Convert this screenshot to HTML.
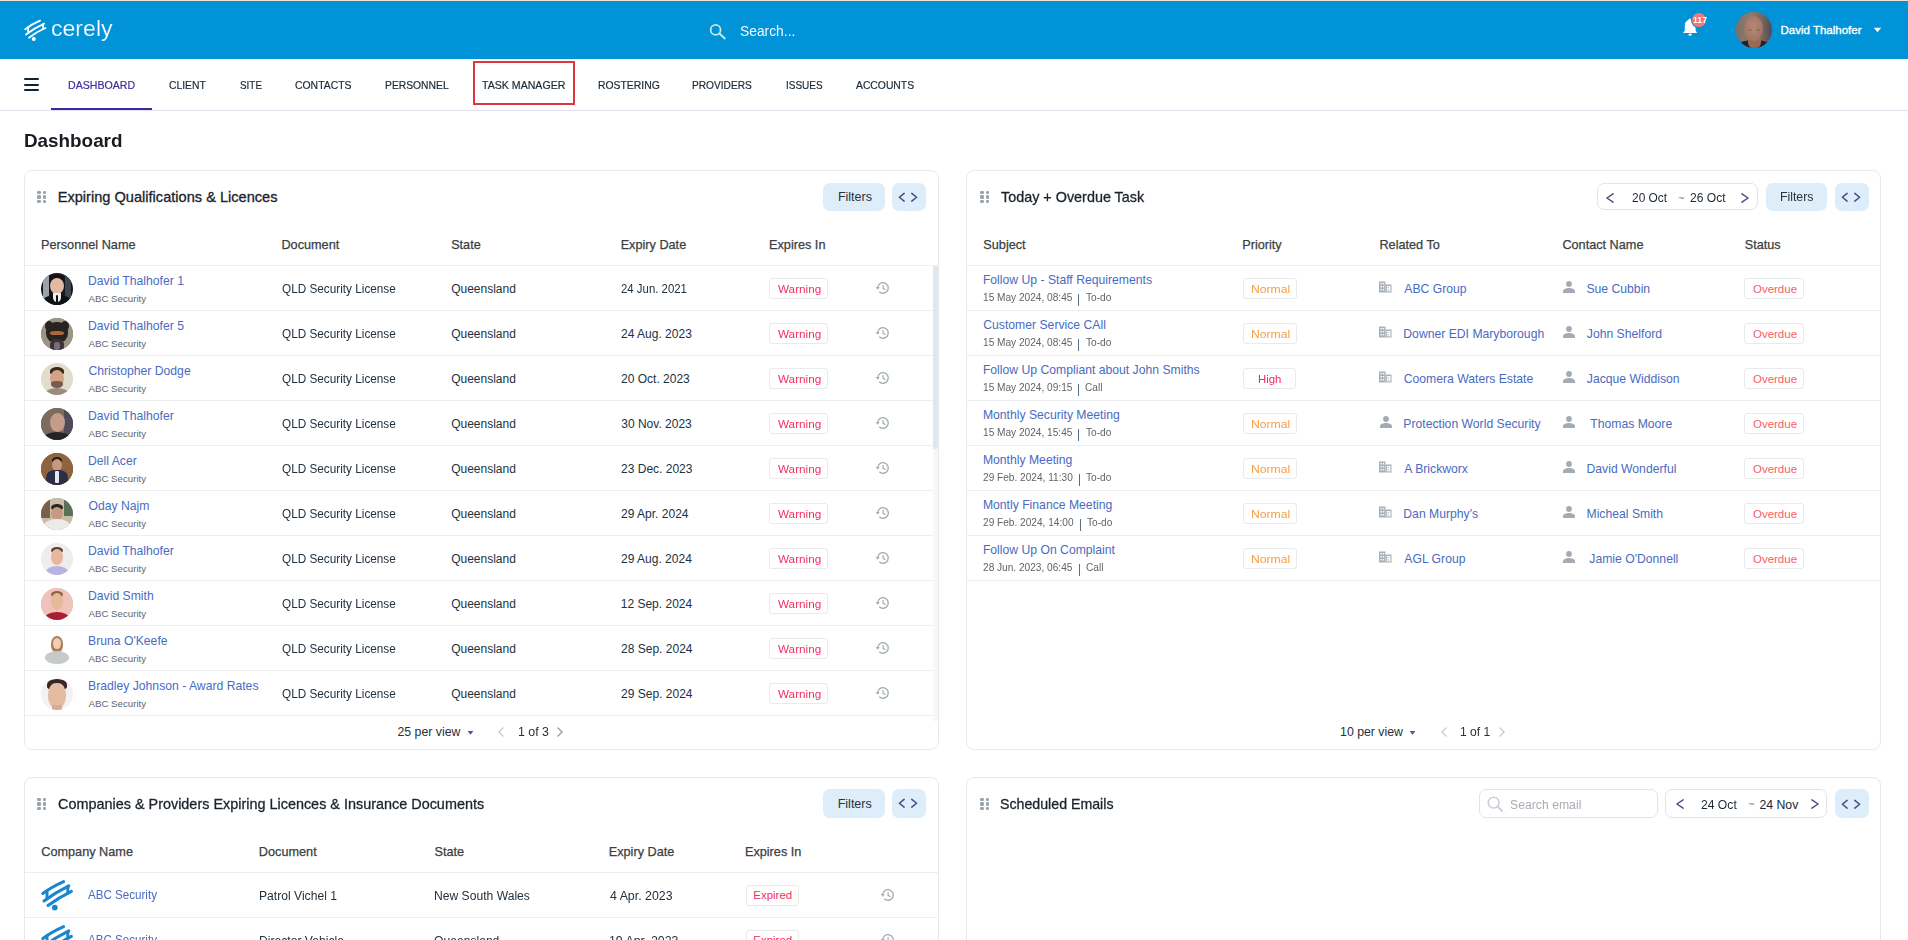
<!DOCTYPE html>
<html><head><meta charset="utf-8"><title>Dashboard</title>
<style>
*{box-sizing:border-box;margin:0;padding:0}
html,body{width:1908px;height:940px;overflow:hidden;background:#fff;font-family:"Liberation Sans",sans-serif}
.a{position:absolute}
.card{position:absolute;background:#fff;border:1px solid #e9e9eb;border-radius:8px}
.btn{position:absolute;background:#ddedfa;border-radius:7px}
.sep{position:absolute;height:1px;background:#eceef0}
.tag{position:absolute;border:1px solid #e9eaec;border-radius:3px;background:#fff}
.av{position:absolute;width:32px;height:32px;border-radius:50%;overflow:hidden}
.av i{position:absolute;display:block;filter:blur(0.6px)}
</style></head>
<body>
<div class="a" style="left:0;top:0;width:1908px;height:1px;background:#eee3d6"></div>
<div class="a" style="left:0;top:1px;width:1908px;height:58px;background:#0093d7"></div>
<svg class="a" style="left:20.30px;top:14.60px" width="32.56" height="32.56" viewBox="0 0 44 44"><g stroke="#fff" stroke-width="2.40" stroke-linecap="round" fill="none"><path d="M7 19.2 Q16.3 12 27.2 7.6"/><path d="M8.1 26.3 Q19.6 17.6 32.7 11.6"/><path d="M12.2 30.7 Q22.5 22.8 34.4 17.6"/><path d="M11 16.4 L11 23.6"/><path d="M31.2 12.3 L31.2 18.4"/></g><circle cx="18.6" cy="32.3" r="2.7" fill="#fff"/></svg>
<div style="position:absolute;left:51.04px;top:18.00px;font-size:22.5px;line-height:1;color:#fff;white-space:nowrap;transform:scaleX(1.0254);transform-origin:0 0;-webkit-text-stroke:0.2px #0093d7;">cerely</div>
<svg class="a" style="left:706px;top:20px" width="24" height="22" viewBox="0 0 24 22">
<circle cx="9.6" cy="9.9" r="4.95" stroke="#d0e6d8" stroke-width="1.8" fill="none"/>
<path d="M13.4 13.6 L18.8 18.4" stroke="#d0e6d8" stroke-width="2" stroke-linecap="round"/></svg>
<div style="position:absolute;left:740.44px;top:24.00px;font-size:14.5px;line-height:1;color:#f2f8fc;white-space:nowrap;transform:scaleX(0.9536);transform-origin:0 0;">Search...</div>
<svg class="a" style="left:1681px;top:16px" width="18" height="22" viewBox="0 0 18 22">
<path d="M8.8 2.4 C8 2.4 7.5 3.2 7.5 3.9 C5.1 4.6 3.8 6.8 3.8 9.6 L3.8 14.6 L2.1 17 L16.1 17 L14.6 14.6 L14.6 9.6 C14.6 6.8 13.1 4.6 10.1 3.9 C10.1 3.2 9.6 2.4 8.8 2.4Z" fill="#fff"/>
<ellipse cx="9.1" cy="18.7" rx="1.7" ry="1.1" fill="#fff"/></svg>
<div class="a" style="left:1692.3px;top:13.2px;width:13.6px;height:13.6px;border-radius:50%;background:#f57674;box-shadow:0 0 0 1px #0093d7"></div>
<div style="position:absolute;left:1692.57px;top:17.00px;font-size:8.2px;line-height:1;color:#fff;white-space:nowrap;font-weight:bold;transform:scaleX(1.0558);transform-origin:0 0;">117</div>
<div class="a" style="left:1736px;top:12px;width:36px;height:36px;border-radius:50%;overflow:hidden;background:#857468">
<div class="a" style="left:0;top:0;width:36px;height:36px;background:linear-gradient(90deg,#7e6e66,#8c7c72 40%,#72665e 75%,#50485a)"></div>
<div class="a" style="left:-3px;top:28px;width:42px;height:22px;border-radius:50%;background:#1e202e"></div>
<div class="a" style="left:11.5px;top:24px;width:13px;height:13px;border-radius:0 0 50% 50%;background:#9a6a56"></div>
<div class="a" style="left:8px;top:4px;width:19px;height:25px;border-radius:50%;background:radial-gradient(ellipse at 50% 45%,#b48878 0,#a87a68 55%,#94705e 100%)"></div>
<div class="a" style="left:12px;top:17px;width:4px;height:1.5px;background:#6a4a40;opacity:.3"></div>
<div class="a" style="left:19.5px;top:17px;width:4px;height:1.5px;background:#6a4a40;opacity:.3"></div>
</div>
<div style="position:absolute;left:1780.57px;top:25.00px;font-size:11.5px;line-height:1;color:#fff;white-space:nowrap;-webkit-text-stroke:0.35px #fff;">David Thalhofer</div>
<svg class="a" style="left:1873px;top:27px" width="9" height="6" viewBox="0 0 9 6"><path d="M0.8 0.8 L8.2 0.8 L4.5 5.2Z" fill="#fff"/></svg>
<div class="a" style="left:0;top:110px;width:1908px;height:1px;background:#e2e3ee"></div>
<div class="a" style="left:24px;top:78.2px;width:15px;height:1.9px;background:#0f2535;border-radius:1px"></div>
<div class="a" style="left:24px;top:83.7px;width:15px;height:1.9px;background:#0f2535;border-radius:1px"></div>
<div class="a" style="left:24px;top:89.2px;width:15px;height:1.9px;background:#0f2535;border-radius:1px"></div>
<div class="a" style="left:51px;top:108px;width:101px;height:2px;background:#3a2a9d"></div>
<div style="position:absolute;left:68.03px;top:80.00px;font-size:11.4px;line-height:1;color:#3b2c9c;white-space:nowrap;transform:scaleX(0.9297);transform-origin:0 0;-webkit-text-stroke:0.2px #3b2c9c;">DASHBOARD</div>
<div style="position:absolute;left:168.99px;top:80.00px;font-size:11.4px;line-height:1;color:#1a2936;white-space:nowrap;transform:scaleX(0.9085);transform-origin:0 0;-webkit-text-stroke:0.2px #1a2936;">CLIENT</div>
<div style="position:absolute;left:239.57px;top:80.00px;font-size:11.4px;line-height:1;color:#1a2936;white-space:nowrap;transform:scaleX(0.8679);transform-origin:0 0;-webkit-text-stroke:0.2px #1a2936;">SITE</div>
<div style="position:absolute;left:294.99px;top:80.00px;font-size:11.4px;line-height:1;color:#1a2936;white-space:nowrap;transform:scaleX(0.9138);transform-origin:0 0;-webkit-text-stroke:0.2px #1a2936;">CONTACTS</div>
<div style="position:absolute;left:384.65px;top:80.00px;font-size:11.4px;line-height:1;color:#1a2936;white-space:nowrap;transform:scaleX(0.9054);transform-origin:0 0;-webkit-text-stroke:0.2px #1a2936;">PERSONNEL</div>
<div style="position:absolute;left:482.27px;top:80.00px;font-size:11.4px;line-height:1;color:#1a2936;white-space:nowrap;transform:scaleX(0.9296);transform-origin:0 0;-webkit-text-stroke:0.2px #1a2936;">TASK MANAGER</div>
<div style="position:absolute;left:598.15px;top:80.00px;font-size:11.4px;line-height:1;color:#1a2936;white-space:nowrap;transform:scaleX(0.9117);transform-origin:0 0;-webkit-text-stroke:0.2px #1a2936;">ROSTERING</div>
<div style="position:absolute;left:692.46px;top:80.00px;font-size:11.4px;line-height:1;color:#1a2936;white-space:nowrap;transform:scaleX(0.8908);transform-origin:0 0;-webkit-text-stroke:0.2px #1a2936;">PROVIDERS</div>
<div style="position:absolute;left:785.57px;top:80.00px;font-size:11.4px;line-height:1;color:#1a2936;white-space:nowrap;transform:scaleX(0.8773);transform-origin:0 0;-webkit-text-stroke:0.2px #1a2936;">ISSUES</div>
<div style="position:absolute;left:855.50px;top:80.00px;font-size:11.4px;line-height:1;color:#1a2936;white-space:nowrap;transform:scaleX(0.9082);transform-origin:0 0;-webkit-text-stroke:0.2px #1a2936;">ACCOUNTS</div>
<div class="a" style="left:473px;top:61px;width:102px;height:44px;border:2px solid #e0363e"></div>
<div style="position:absolute;left:23.96px;top:131.00px;font-size:19px;line-height:1;color:#171c22;white-space:nowrap;font-weight:bold;transform:scaleX(0.9922);transform-origin:0 0;">Dashboard</div>
<div class="card" style="left:24px;top:170px;width:915px;height:580px"></div>
<div class="a" style="left:37.0px;top:191.2px;width:3.6px;height:3.3px;border-radius:1.2px;background:#9aa4ac"></div>
<div class="a" style="left:42.5px;top:191.2px;width:3.6px;height:3.3px;border-radius:1.2px;background:#9aa4ac"></div>
<div class="a" style="left:37.0px;top:195.4px;width:3.6px;height:3.3px;border-radius:1.2px;background:#9aa4ac"></div>
<div class="a" style="left:42.5px;top:195.4px;width:3.6px;height:3.3px;border-radius:1.2px;background:#9aa4ac"></div>
<div class="a" style="left:37.0px;top:199.6px;width:3.6px;height:3.3px;border-radius:1.2px;background:#9aa4ac"></div>
<div class="a" style="left:42.5px;top:199.6px;width:3.6px;height:3.3px;border-radius:1.2px;background:#9aa4ac"></div>
<div style="position:absolute;left:57.71px;top:190.00px;font-size:14.6px;line-height:1;color:#1b232c;white-space:nowrap;-webkit-text-stroke:0.3px #1b232c;">Expiring Qualifications &amp; Licences</div>
<div class="btn" style="left:823.0px;top:183.0px;width:62.0px;height:28.0px"></div>
<div style="position:absolute;left:837.90px;top:191.00px;font-size:12.5px;line-height:1;color:#27323d;white-space:nowrap;">Filters</div>
<div class="btn" style="left:892.0px;top:183.0px;width:34.0px;height:28.0px"></div>
<svg class="a" style="left:898.0px;top:190.0px" width="22" height="14" viewBox="0 0 22 14"><path d="M6.1 3.4 L1.4 7.25 L6.1 11.1 M13.8 3.4 L18.6 7.25 L13.8 11.1" stroke="#4b4f86" stroke-width="1.6" fill="none" stroke-linecap="round" stroke-linejoin="round"/></svg>
<div style="position:absolute;left:41.04px;top:239.00px;font-size:12.7px;line-height:1;color:#3b3e42;white-space:nowrap;-webkit-text-stroke:0.25px #3b3e42;">Personnel Name</div>
<div style="position:absolute;left:281.44px;top:239.00px;font-size:12.7px;line-height:1;color:#3b3e42;white-space:nowrap;-webkit-text-stroke:0.25px #3b3e42;">Document</div>
<div style="position:absolute;left:451.14px;top:239.00px;font-size:12.7px;line-height:1;color:#3b3e42;white-space:nowrap;-webkit-text-stroke:0.25px #3b3e42;">State</div>
<div style="position:absolute;left:620.64px;top:239.00px;font-size:12.7px;line-height:1;color:#3b3e42;white-space:nowrap;-webkit-text-stroke:0.25px #3b3e42;">Expiry Date</div>
<div style="position:absolute;left:769.04px;top:239.00px;font-size:12.7px;line-height:1;color:#3b3e42;white-space:nowrap;-webkit-text-stroke:0.25px #3b3e42;">Expires In</div>
<div class="sep" style="left:25px;top:265px;width:913px"></div>
<div class="av" style="left:41.0px;top:272.5px;background:#15171c"><i style="left:2.0px;top:0.0px;width:6.0px;height:32.0px;background:#9aa2ac;border-radius:0"></i><i style="left:24.0px;top:0.0px;width:6.0px;height:32.0px;background:#3e4650;border-radius:0"></i><i style="left:9.0px;top:2.0px;width:14.0px;height:9.0px;background:#1a1210;border-radius:50% 50% 30% 30%"></i><i style="left:9.0px;top:5.0px;width:14.0px;height:16.0px;background:#e2baa4;border-radius:50%"></i><i style="left:2.0px;top:22.0px;width:28.0px;height:14.0px;background:#101114;border-radius:45%"></i><i style="left:12.0px;top:20.0px;width:8.0px;height:9.0px;background:#f0f0f0;border-radius:0 0 50% 50%"></i><i style="left:15.0px;top:22.0px;width:2.0px;height:9.0px;background:#111;border-radius:1px"></i></div>
<div style="position:absolute;left:88.00px;top:275.00px;font-size:12.2px;line-height:1;color:#4a6bbf;white-space:nowrap;">David Thalhofer 1</div>
<div style="position:absolute;left:88.50px;top:294.00px;font-size:9.7px;line-height:1;color:#62666b;white-space:nowrap;">ABC Security</div>
<div style="position:absolute;left:281.95px;top:283.00px;font-size:12px;line-height:1;color:#22313f;white-space:nowrap;transform:scaleX(0.9805);transform-origin:0 0;">QLD Security License</div>
<div style="position:absolute;left:451.14px;top:283.00px;font-size:12px;line-height:1;color:#22313f;white-space:nowrap;">Queensland</div>
<div style="position:absolute;left:621.11px;top:283.00px;font-size:12px;line-height:1;color:#22313f;white-space:nowrap;transform:scaleX(0.9500);transform-origin:0 0;">24 Jun. 2021</div>
<div class="tag" style="left:769.0px;top:278.0px;width:58.7px;height:21.0px"></div>
<div style="position:absolute;left:778.04px;top:284.00px;font-size:11.5px;line-height:1;color:#f52f62;white-space:nowrap;transform:scaleX(1.0186);transform-origin:0 0;">Warning</div>
<svg class="a" style="left:875.0px;top:280.0px" width="16" height="16" viewBox="0 0 16 16"><path d="M2.7 8 A5.3 5.3 0 1 1 4.25 11.75" stroke="#a2acb3" stroke-width="1.35" fill="none"/><path d="M0.7 7 L4.7 7 L2.7 9.8Z" fill="#a2acb3"/><path d="M8.1 5.3 L8.1 8.3 L10.1 9.5" stroke="#a2acb3" stroke-width="1.2" fill="none" stroke-linecap="round"/></svg>
<div class="sep" style="left:25px;top:310px;width:908px"></div>
<div class="av" style="left:41.0px;top:317.5px;background:#8a8274"><i style="left:0.0px;top:0.0px;width:32.0px;height:32.0px;background:#9c9484;border-radius:0"></i><i style="left:5.0px;top:4.0px;width:22.0px;height:21.0px;background:#262422;border-radius:45%"></i><i style="left:4.0px;top:3.0px;width:8.0px;height:10.0px;background:#262422;border-radius:50%"></i><i style="left:20.0px;top:3.0px;width:8.0px;height:10.0px;background:#262422;border-radius:50%"></i><i style="left:9.0px;top:13.0px;width:14.0px;height:4.0px;background:#b06838;border-radius:40%"></i><i style="left:9.0px;top:21.0px;width:14.0px;height:13.0px;background:#3a3438;border-radius:40%"></i><i style="left:13.0px;top:24.0px;width:6.0px;height:8.0px;background:#7a6a80;border-radius:40%"></i></div>
<div style="position:absolute;left:88.00px;top:320.00px;font-size:12.2px;line-height:1;color:#4a6bbf;white-space:nowrap;">David Thalhofer 5</div>
<div style="position:absolute;left:88.50px;top:339.00px;font-size:9.7px;line-height:1;color:#62666b;white-space:nowrap;">ABC Security</div>
<div style="position:absolute;left:281.95px;top:328.00px;font-size:12px;line-height:1;color:#22313f;white-space:nowrap;transform:scaleX(0.9805);transform-origin:0 0;">QLD Security License</div>
<div style="position:absolute;left:451.14px;top:328.00px;font-size:12px;line-height:1;color:#22313f;white-space:nowrap;">Queensland</div>
<div style="position:absolute;left:621.08px;top:328.00px;font-size:12px;line-height:1;color:#22313f;white-space:nowrap;">24 Aug. 2023</div>
<div class="tag" style="left:769.0px;top:323.0px;width:58.7px;height:21.0px"></div>
<div style="position:absolute;left:778.04px;top:329.00px;font-size:11.5px;line-height:1;color:#f52f62;white-space:nowrap;transform:scaleX(1.0186);transform-origin:0 0;">Warning</div>
<svg class="a" style="left:875.0px;top:325.0px" width="16" height="16" viewBox="0 0 16 16"><path d="M2.7 8 A5.3 5.3 0 1 1 4.25 11.75" stroke="#a2acb3" stroke-width="1.35" fill="none"/><path d="M0.7 7 L4.7 7 L2.7 9.8Z" fill="#a2acb3"/><path d="M8.1 5.3 L8.1 8.3 L10.1 9.5" stroke="#a2acb3" stroke-width="1.2" fill="none" stroke-linecap="round"/></svg>
<div class="sep" style="left:25px;top:355px;width:908px"></div>
<div class="av" style="left:41.0px;top:362.5px;background:#e2dccf"><i style="left:9.0px;top:4.0px;width:14.0px;height:8.0px;background:#3a2818;border-radius:50% 50% 30% 30%"></i><i style="left:9.0px;top:7.0px;width:14.0px;height:17.0px;background:#d2a486;border-radius:50%"></i><i style="left:10.0px;top:18.0px;width:12.0px;height:7.0px;background:#7a5a48;border-radius:40% 40% 50% 50%"></i><i style="left:4.0px;top:25.0px;width:24.0px;height:12.0px;background:#9a8c7c;border-radius:50%"></i></div>
<div style="position:absolute;left:88.38px;top:365.00px;font-size:12.2px;line-height:1;color:#4a6bbf;white-space:nowrap;">Christopher Dodge</div>
<div style="position:absolute;left:88.50px;top:384.00px;font-size:9.7px;line-height:1;color:#62666b;white-space:nowrap;">ABC Security</div>
<div style="position:absolute;left:281.95px;top:373.00px;font-size:12px;line-height:1;color:#22313f;white-space:nowrap;transform:scaleX(0.9805);transform-origin:0 0;">QLD Security License</div>
<div style="position:absolute;left:451.14px;top:373.00px;font-size:12px;line-height:1;color:#22313f;white-space:nowrap;">Queensland</div>
<div style="position:absolute;left:621.08px;top:373.00px;font-size:12px;line-height:1;color:#22313f;white-space:nowrap;">20 Oct. 2023</div>
<div class="tag" style="left:769.0px;top:368.0px;width:58.7px;height:21.0px"></div>
<div style="position:absolute;left:778.04px;top:374.00px;font-size:11.5px;line-height:1;color:#f52f62;white-space:nowrap;transform:scaleX(1.0186);transform-origin:0 0;">Warning</div>
<svg class="a" style="left:875.0px;top:370.0px" width="16" height="16" viewBox="0 0 16 16"><path d="M2.7 8 A5.3 5.3 0 1 1 4.25 11.75" stroke="#a2acb3" stroke-width="1.35" fill="none"/><path d="M0.7 7 L4.7 7 L2.7 9.8Z" fill="#a2acb3"/><path d="M8.1 5.3 L8.1 8.3 L10.1 9.5" stroke="#a2acb3" stroke-width="1.2" fill="none" stroke-linecap="round"/></svg>
<div class="sep" style="left:25px;top:400px;width:908px"></div>
<div class="av" style="left:41.0px;top:407.5px;background:#6e6055"><i style="left:0.0px;top:0.0px;width:32.0px;height:32.0px;background:#7c6b5e;border-radius:0"></i><i style="left:23.0px;top:0.0px;width:9.0px;height:32.0px;background:#4e4a5a;border-radius:0"></i><i style="left:9.0px;top:5.0px;width:15.0px;height:19.0px;background:#c49c88;border-radius:50%"></i><i style="left:3.0px;top:24.0px;width:26.0px;height:12.0px;background:#25232a;border-radius:50%"></i></div>
<div style="position:absolute;left:88.00px;top:410.00px;font-size:12.2px;line-height:1;color:#4a6bbf;white-space:nowrap;">David Thalhofer</div>
<div style="position:absolute;left:88.50px;top:429.00px;font-size:9.7px;line-height:1;color:#62666b;white-space:nowrap;">ABC Security</div>
<div style="position:absolute;left:281.95px;top:418.00px;font-size:12px;line-height:1;color:#22313f;white-space:nowrap;transform:scaleX(0.9805);transform-origin:0 0;">QLD Security License</div>
<div style="position:absolute;left:451.14px;top:418.00px;font-size:12px;line-height:1;color:#22313f;white-space:nowrap;">Queensland</div>
<div style="position:absolute;left:621.26px;top:418.00px;font-size:12px;line-height:1;color:#22313f;white-space:nowrap;">30 Nov. 2023</div>
<div class="tag" style="left:769.0px;top:413.0px;width:58.7px;height:21.0px"></div>
<div style="position:absolute;left:778.04px;top:419.00px;font-size:11.5px;line-height:1;color:#f52f62;white-space:nowrap;transform:scaleX(1.0186);transform-origin:0 0;">Warning</div>
<svg class="a" style="left:875.0px;top:415.0px" width="16" height="16" viewBox="0 0 16 16"><path d="M2.7 8 A5.3 5.3 0 1 1 4.25 11.75" stroke="#a2acb3" stroke-width="1.35" fill="none"/><path d="M0.7 7 L4.7 7 L2.7 9.8Z" fill="#a2acb3"/><path d="M8.1 5.3 L8.1 8.3 L10.1 9.5" stroke="#a2acb3" stroke-width="1.2" fill="none" stroke-linecap="round"/></svg>
<div class="sep" style="left:25px;top:445px;width:908px"></div>
<div class="av" style="left:41.0px;top:452.5px;background:#7a5030"><i style="left:0.0px;top:0.0px;width:32.0px;height:32.0px;background:#8e6440;border-radius:0"></i><i style="left:11.0px;top:4.0px;width:10.0px;height:7.0px;background:#1e1814;border-radius:50%"></i><i style="left:11.0px;top:6.0px;width:10.0px;height:12.0px;background:#c8987c;border-radius:50%"></i><i style="left:5.0px;top:17.0px;width:22.0px;height:18.0px;background:#2a2e48;border-radius:40%"></i><i style="left:14.0px;top:18.0px;width:4.0px;height:12.0px;background:#e8e8e8;border-radius:1px"></i></div>
<div style="position:absolute;left:88.00px;top:455.00px;font-size:12.2px;line-height:1;color:#4a6bbf;white-space:nowrap;">Dell Acer</div>
<div style="position:absolute;left:88.50px;top:474.00px;font-size:9.7px;line-height:1;color:#62666b;white-space:nowrap;">ABC Security</div>
<div style="position:absolute;left:281.95px;top:463.00px;font-size:12px;line-height:1;color:#22313f;white-space:nowrap;transform:scaleX(0.9805);transform-origin:0 0;">QLD Security License</div>
<div style="position:absolute;left:451.14px;top:463.00px;font-size:12px;line-height:1;color:#22313f;white-space:nowrap;">Queensland</div>
<div style="position:absolute;left:621.08px;top:463.00px;font-size:12px;line-height:1;color:#22313f;white-space:nowrap;">23 Dec. 2023</div>
<div class="tag" style="left:769.0px;top:458.0px;width:58.7px;height:21.0px"></div>
<div style="position:absolute;left:778.04px;top:464.00px;font-size:11.5px;line-height:1;color:#f52f62;white-space:nowrap;transform:scaleX(1.0186);transform-origin:0 0;">Warning</div>
<svg class="a" style="left:875.0px;top:460.0px" width="16" height="16" viewBox="0 0 16 16"><path d="M2.7 8 A5.3 5.3 0 1 1 4.25 11.75" stroke="#a2acb3" stroke-width="1.35" fill="none"/><path d="M0.7 7 L4.7 7 L2.7 9.8Z" fill="#a2acb3"/><path d="M8.1 5.3 L8.1 8.3 L10.1 9.5" stroke="#a2acb3" stroke-width="1.2" fill="none" stroke-linecap="round"/></svg>
<div class="sep" style="left:25px;top:490px;width:908px"></div>
<div class="av" style="left:41.0px;top:497.5px;background:#b8a890"><i style="left:0.0px;top:0.0px;width:32.0px;height:32.0px;background:#c9bda8;border-radius:0"></i><i style="left:0.0px;top:0.0px;width:9.0px;height:20.0px;background:#7a6048;border-radius:0"></i><i style="left:23.0px;top:2.0px;width:9.0px;height:16.0px;background:#5a7058;border-radius:0"></i><i style="left:10.0px;top:6.0px;width:12.0px;height:7.0px;background:#2e241e;border-radius:50%"></i><i style="left:10.0px;top:9.0px;width:12.0px;height:13.0px;background:#c49a80;border-radius:50%"></i><i style="left:3.0px;top:21.0px;width:26.0px;height:14.0px;background:#ecebea;border-radius:50%"></i></div>
<div style="position:absolute;left:88.44px;top:500.00px;font-size:12.2px;line-height:1;color:#4a6bbf;white-space:nowrap;">Oday Najm</div>
<div style="position:absolute;left:88.50px;top:519.00px;font-size:9.7px;line-height:1;color:#62666b;white-space:nowrap;">ABC Security</div>
<div style="position:absolute;left:281.95px;top:508.00px;font-size:12px;line-height:1;color:#22313f;white-space:nowrap;transform:scaleX(0.9805);transform-origin:0 0;">QLD Security License</div>
<div style="position:absolute;left:451.14px;top:508.00px;font-size:12px;line-height:1;color:#22313f;white-space:nowrap;">Queensland</div>
<div style="position:absolute;left:621.08px;top:508.00px;font-size:12px;line-height:1;color:#22313f;white-space:nowrap;">29 Apr. 2024</div>
<div class="tag" style="left:769.0px;top:503.0px;width:58.7px;height:21.0px"></div>
<div style="position:absolute;left:778.04px;top:509.00px;font-size:11.5px;line-height:1;color:#f52f62;white-space:nowrap;transform:scaleX(1.0186);transform-origin:0 0;">Warning</div>
<svg class="a" style="left:875.0px;top:505.0px" width="16" height="16" viewBox="0 0 16 16"><path d="M2.7 8 A5.3 5.3 0 1 1 4.25 11.75" stroke="#a2acb3" stroke-width="1.35" fill="none"/><path d="M0.7 7 L4.7 7 L2.7 9.8Z" fill="#a2acb3"/><path d="M8.1 5.3 L8.1 8.3 L10.1 9.5" stroke="#a2acb3" stroke-width="1.2" fill="none" stroke-linecap="round"/></svg>
<div class="sep" style="left:25px;top:535px;width:908px"></div>
<div class="av" style="left:41.0px;top:542.5px;background:#efeceb"><i style="left:10.0px;top:4.0px;width:12.0px;height:7.0px;background:#5a4030;border-radius:50%"></i><i style="left:10.0px;top:6.0px;width:12.0px;height:16.0px;background:#e6b89e;border-radius:50%"></i><i style="left:5.0px;top:23.0px;width:22.0px;height:12.0px;background:#b8b4e0;border-radius:50%"></i></div>
<div style="position:absolute;left:88.00px;top:545.00px;font-size:12.2px;line-height:1;color:#4a6bbf;white-space:nowrap;">David Thalhofer</div>
<div style="position:absolute;left:88.50px;top:564.00px;font-size:9.7px;line-height:1;color:#62666b;white-space:nowrap;">ABC Security</div>
<div style="position:absolute;left:281.95px;top:553.00px;font-size:12px;line-height:1;color:#22313f;white-space:nowrap;transform:scaleX(0.9805);transform-origin:0 0;">QLD Security License</div>
<div style="position:absolute;left:451.14px;top:553.00px;font-size:12px;line-height:1;color:#22313f;white-space:nowrap;">Queensland</div>
<div style="position:absolute;left:621.08px;top:553.00px;font-size:12px;line-height:1;color:#22313f;white-space:nowrap;">29 Aug. 2024</div>
<div class="tag" style="left:769.0px;top:548.0px;width:58.7px;height:21.0px"></div>
<div style="position:absolute;left:778.04px;top:554.00px;font-size:11.5px;line-height:1;color:#f52f62;white-space:nowrap;transform:scaleX(1.0186);transform-origin:0 0;">Warning</div>
<svg class="a" style="left:875.0px;top:550.0px" width="16" height="16" viewBox="0 0 16 16"><path d="M2.7 8 A5.3 5.3 0 1 1 4.25 11.75" stroke="#a2acb3" stroke-width="1.35" fill="none"/><path d="M0.7 7 L4.7 7 L2.7 9.8Z" fill="#a2acb3"/><path d="M8.1 5.3 L8.1 8.3 L10.1 9.5" stroke="#a2acb3" stroke-width="1.2" fill="none" stroke-linecap="round"/></svg>
<div class="sep" style="left:25px;top:580px;width:908px"></div>
<div class="av" style="left:41.0px;top:587.5px;background:#e8b8b0"><i style="left:0.0px;top:0.0px;width:32.0px;height:32.0px;background:#efc3bb;border-radius:0"></i><i style="left:10.0px;top:3.0px;width:12.0px;height:7.0px;background:#8a6440;border-radius:50%"></i><i style="left:10.0px;top:5.0px;width:12.0px;height:17.0px;background:#e8b89a;border-radius:50%"></i><i style="left:4.0px;top:24.0px;width:24.0px;height:12.0px;background:#a82030;border-radius:50%"></i></div>
<div style="position:absolute;left:88.00px;top:590.00px;font-size:12.2px;line-height:1;color:#4a6bbf;white-space:nowrap;">David Smith</div>
<div style="position:absolute;left:88.50px;top:609.00px;font-size:9.7px;line-height:1;color:#62666b;white-space:nowrap;">ABC Security</div>
<div style="position:absolute;left:281.95px;top:598.00px;font-size:12px;line-height:1;color:#22313f;white-space:nowrap;transform:scaleX(0.9805);transform-origin:0 0;">QLD Security License</div>
<div style="position:absolute;left:451.14px;top:598.00px;font-size:12px;line-height:1;color:#22313f;white-space:nowrap;">Queensland</div>
<div style="position:absolute;left:620.76px;top:598.00px;font-size:12px;line-height:1;color:#22313f;white-space:nowrap;">12 Sep. 2024</div>
<div class="tag" style="left:769.0px;top:593.0px;width:58.7px;height:21.0px"></div>
<div style="position:absolute;left:778.04px;top:599.00px;font-size:11.5px;line-height:1;color:#f52f62;white-space:nowrap;transform:scaleX(1.0186);transform-origin:0 0;">Warning</div>
<svg class="a" style="left:875.0px;top:595.0px" width="16" height="16" viewBox="0 0 16 16"><path d="M2.7 8 A5.3 5.3 0 1 1 4.25 11.75" stroke="#a2acb3" stroke-width="1.35" fill="none"/><path d="M0.7 7 L4.7 7 L2.7 9.8Z" fill="#a2acb3"/><path d="M8.1 5.3 L8.1 8.3 L10.1 9.5" stroke="#a2acb3" stroke-width="1.2" fill="none" stroke-linecap="round"/></svg>
<div class="sep" style="left:25px;top:625px;width:908px"></div>
<div class="av" style="left:41.0px;top:632.5px;background:#ffffff"><i style="left:10.0px;top:3.0px;width:12.0px;height:16.0px;background:#a88060;border-radius:50% 50% 40% 40%"></i><i style="left:12.0px;top:5.0px;width:8.0px;height:11.0px;background:#f0cdb4;border-radius:50%"></i><i style="left:4.0px;top:18.0px;width:24.0px;height:13.0px;background:#c6cac8;border-radius:50% 50% 45% 45%"></i></div>
<div style="position:absolute;left:88.00px;top:635.00px;font-size:12.2px;line-height:1;color:#4a6bbf;white-space:nowrap;">Bruna O'Keefe</div>
<div style="position:absolute;left:88.50px;top:654.00px;font-size:9.7px;line-height:1;color:#62666b;white-space:nowrap;">ABC Security</div>
<div style="position:absolute;left:281.95px;top:643.00px;font-size:12px;line-height:1;color:#22313f;white-space:nowrap;transform:scaleX(0.9805);transform-origin:0 0;">QLD Security License</div>
<div style="position:absolute;left:451.14px;top:643.00px;font-size:12px;line-height:1;color:#22313f;white-space:nowrap;">Queensland</div>
<div style="position:absolute;left:621.08px;top:643.00px;font-size:12px;line-height:1;color:#22313f;white-space:nowrap;">28 Sep. 2024</div>
<div class="tag" style="left:769.0px;top:638.0px;width:58.7px;height:21.0px"></div>
<div style="position:absolute;left:778.04px;top:644.00px;font-size:11.5px;line-height:1;color:#f52f62;white-space:nowrap;transform:scaleX(1.0186);transform-origin:0 0;">Warning</div>
<svg class="a" style="left:875.0px;top:640.0px" width="16" height="16" viewBox="0 0 16 16"><path d="M2.7 8 A5.3 5.3 0 1 1 4.25 11.75" stroke="#a2acb3" stroke-width="1.35" fill="none"/><path d="M0.7 7 L4.7 7 L2.7 9.8Z" fill="#a2acb3"/><path d="M8.1 5.3 L8.1 8.3 L10.1 9.5" stroke="#a2acb3" stroke-width="1.2" fill="none" stroke-linecap="round"/></svg>
<div class="sep" style="left:25px;top:670px;width:908px"></div>
<div class="av" style="left:41.0px;top:677.5px;background:#f3f1f1"><i style="left:6.0px;top:1.0px;width:20.0px;height:11.0px;background:#3a2620;border-radius:50% 50% 30% 30%"></i><i style="left:7.0px;top:5.0px;width:18.0px;height:25.0px;background:#e4bca2;border-radius:45%"></i><i style="left:11.0px;top:27.0px;width:10.0px;height:6.0px;background:#d8ac92;border-radius:0"></i></div>
<div style="position:absolute;left:88.00px;top:680.00px;font-size:12.2px;line-height:1;color:#4a6bbf;white-space:nowrap;">Bradley Johnson - Award Rates</div>
<div style="position:absolute;left:88.50px;top:699.00px;font-size:9.7px;line-height:1;color:#62666b;white-space:nowrap;">ABC Security</div>
<div style="position:absolute;left:281.95px;top:688.00px;font-size:12px;line-height:1;color:#22313f;white-space:nowrap;transform:scaleX(0.9805);transform-origin:0 0;">QLD Security License</div>
<div style="position:absolute;left:451.14px;top:688.00px;font-size:12px;line-height:1;color:#22313f;white-space:nowrap;">Queensland</div>
<div style="position:absolute;left:621.08px;top:688.00px;font-size:12px;line-height:1;color:#22313f;white-space:nowrap;">29 Sep. 2024</div>
<div class="tag" style="left:769.0px;top:683.0px;width:58.7px;height:21.0px"></div>
<div style="position:absolute;left:778.04px;top:689.00px;font-size:11.5px;line-height:1;color:#f52f62;white-space:nowrap;transform:scaleX(1.0186);transform-origin:0 0;">Warning</div>
<svg class="a" style="left:875.0px;top:685.0px" width="16" height="16" viewBox="0 0 16 16"><path d="M2.7 8 A5.3 5.3 0 1 1 4.25 11.75" stroke="#a2acb3" stroke-width="1.35" fill="none"/><path d="M0.7 7 L4.7 7 L2.7 9.8Z" fill="#a2acb3"/><path d="M8.1 5.3 L8.1 8.3 L10.1 9.5" stroke="#a2acb3" stroke-width="1.2" fill="none" stroke-linecap="round"/></svg>
<div class="sep" style="left:25px;top:715px;width:908px"></div>
<div class="a" style="left:933px;top:266px;width:5px;height:455px;background:#f6f7f8"></div>
<div class="a" style="left:933px;top:266px;width:5px;height:183px;background:#dfe7ef;border-radius:2px"></div>
<div style="position:absolute;left:397.47px;top:726.00px;font-size:12.3px;line-height:1;color:#27313b;white-space:nowrap;">25 per view</div>
<svg class="a" style="left:466.5px;top:729.5px" width="7" height="6" viewBox="0 0 7 6"><path d="M0.6 1 L6.4 1 L3.5 4.8Z" fill="#4d5690"/></svg>
<svg class="a" style="left:497.5px;top:726.5px" width="6" height="10" viewBox="0 0 6 10"><path d="M5.1 0.8 L0.9 5.0 L5.1 9.2" stroke="#c3c7cf" stroke-width="1.2" fill="none" stroke-linecap="round" stroke-linejoin="round"/></svg>
<div style="position:absolute;left:517.86px;top:726.00px;font-size:12.3px;line-height:1;color:#27313b;white-space:nowrap;transform:scaleX(1.0064);transform-origin:0 0;">1 of 3</div>
<svg class="a" style="left:556.5px;top:726.5px" width="6" height="10" viewBox="0 0 6 10"><path d="M0.9 0.8 L5.1 5.0 L0.9 9.2" stroke="#8e93a3" stroke-width="1.2" fill="none" stroke-linecap="round" stroke-linejoin="round"/></svg>
<div class="card" style="left:966px;top:170px;width:915px;height:580px"></div>
<div class="a" style="left:980.0px;top:191.2px;width:3.6px;height:3.3px;border-radius:1.2px;background:#9aa4ac"></div>
<div class="a" style="left:985.5px;top:191.2px;width:3.6px;height:3.3px;border-radius:1.2px;background:#9aa4ac"></div>
<div class="a" style="left:980.0px;top:195.4px;width:3.6px;height:3.3px;border-radius:1.2px;background:#9aa4ac"></div>
<div class="a" style="left:985.5px;top:195.4px;width:3.6px;height:3.3px;border-radius:1.2px;background:#9aa4ac"></div>
<div class="a" style="left:980.0px;top:199.6px;width:3.6px;height:3.3px;border-radius:1.2px;background:#9aa4ac"></div>
<div class="a" style="left:985.5px;top:199.6px;width:3.6px;height:3.3px;border-radius:1.2px;background:#9aa4ac"></div>
<div style="position:absolute;left:1000.69px;top:190.00px;font-size:14.6px;line-height:1;color:#1b232c;white-space:nowrap;transform:scaleX(0.9850);transform-origin:0 0;-webkit-text-stroke:0.3px #1b232c;">Today + Overdue Task</div>
<div class="a" style="left:1596.5px;top:183.4px;width:161.1px;height:27.1px;border:1px solid #e2e4e7;border-radius:7px;background:#fff"></div>
<svg class="a" style="left:1606.4px;top:192.8px" width="8" height="10" viewBox="0 0 8 10"><path d="M7.1 0.8 L0.9 5.0 L7.1 9.2" stroke="#4b4f80" stroke-width="1.5" fill="none" stroke-linecap="round" stroke-linejoin="round"/></svg>
<div style="position:absolute;left:1632.19px;top:192.00px;font-size:12.3px;line-height:1;color:#1d2935;white-space:nowrap;transform:scaleX(0.9701);transform-origin:0 0;">20 Oct</div>
<div style="position:absolute;left:1678.34px;top:194.00px;font-size:9px;line-height:1;color:#6b7280;white-space:nowrap;transform:scaleX(1.2222);transform-origin:0 0;">~</div>
<div style="position:absolute;left:1690.48px;top:192.00px;font-size:12.3px;line-height:1;color:#1d2935;white-space:nowrap;transform:scaleX(0.9842);transform-origin:0 0;">26 Oct</div>
<svg class="a" style="left:1741.4px;top:192.8px" width="8" height="10" viewBox="0 0 8 10"><path d="M0.9 0.8 L7.1 5.0 L0.9 9.2" stroke="#4b4f80" stroke-width="1.5" fill="none" stroke-linecap="round" stroke-linejoin="round"/></svg>
<div class="btn" style="left:1766.0px;top:183.0px;width:60.6px;height:27.5px"></div>
<div style="position:absolute;left:1780.12px;top:191.00px;font-size:12.5px;line-height:1;color:#27323d;white-space:nowrap;transform:scaleX(0.9827);transform-origin:0 0;">Filters</div>
<div class="btn" style="left:1835.0px;top:183.0px;width:33.8px;height:27.5px"></div>
<svg class="a" style="left:1840.9px;top:189.8px" width="22" height="14" viewBox="0 0 22 14"><path d="M6.1 3.4 L1.4 7.25 L6.1 11.1 M13.8 3.4 L18.6 7.25 L13.8 11.1" stroke="#4b4f86" stroke-width="1.6" fill="none" stroke-linecap="round" stroke-linejoin="round"/></svg>
<div style="position:absolute;left:983.34px;top:239.00px;font-size:12.7px;line-height:1;color:#3b3e42;white-space:nowrap;-webkit-text-stroke:0.25px #3b3e42;">Subject</div>
<div style="position:absolute;left:1242.24px;top:239.00px;font-size:12.7px;line-height:1;color:#3b3e42;white-space:nowrap;-webkit-text-stroke:0.25px #3b3e42;">Priority</div>
<div style="position:absolute;left:1379.44px;top:239.00px;font-size:12.7px;line-height:1;color:#3b3e42;white-space:nowrap;-webkit-text-stroke:0.25px #3b3e42;">Related To</div>
<div style="position:absolute;left:1562.38px;top:239.00px;font-size:12.7px;line-height:1;color:#3b3e42;white-space:nowrap;-webkit-text-stroke:0.25px #3b3e42;">Contact Name</div>
<div style="position:absolute;left:1744.74px;top:239.00px;font-size:12.7px;line-height:1;color:#3b3e42;white-space:nowrap;-webkit-text-stroke:0.25px #3b3e42;">Status</div>
<div class="sep" style="left:967px;top:265px;width:913px"></div>
<div style="position:absolute;left:982.90px;top:274.00px;font-size:12.2px;line-height:1;color:#4a6bbf;white-space:nowrap;">Follow Up - Staff Requirements</div>
<div style="position:absolute;left:983.14px;top:293.00px;font-size:10px;line-height:1;color:#606469;white-space:nowrap;transform:scaleX(1.0116);transform-origin:0 0;">15 May 2024, 08:45</div>
<div class="a" style="left:1078px;top:294.0px;width:1.2px;height:12px;background:#587080"></div>
<div style="position:absolute;left:1085.71px;top:293.00px;font-size:10px;line-height:1;color:#606469;white-space:nowrap;transform:scaleX(1.0116);transform-origin:0 0;">To-do</div>
<div class="tag" style="left:1243.3px;top:278.0px;width:53.5px;height:21.0px"></div>
<div style="position:absolute;left:1250.51px;top:284.00px;font-size:11.5px;line-height:1;color:#f79f45;white-space:nowrap;transform:scaleX(1.0572);transform-origin:0 0;">Normal</div>
<svg class="a" style="left:1379.0px;top:281.0px" width="13" height="12" viewBox="0 0 13 12"><g fill="#a9b1b8"><rect x="0" y="0.5" width="6.5" height="11"/><rect x="6.5" y="3.5" width="6" height="8"/></g><g fill="#fff"><rect x="1.5" y="2" width="1.4" height="1.4"/><rect x="3.8" y="2" width="1.4" height="1.4"/><rect x="1.5" y="5" width="1.4" height="1.4"/><rect x="3.8" y="5" width="1.4" height="1.4"/><rect x="1.5" y="8" width="1.4" height="1.4"/><rect x="3.8" y="8" width="1.4" height="1.4"/><rect x="7.8" y="5" width="3.6" height="5.4"/></g><g fill="#a9b1b8"><rect x="8.6" y="6" width="1.2" height="1.2"/><rect x="8.6" y="8.3" width="1.2" height="1.2"/></g></svg>
<div style="position:absolute;left:1404.30px;top:283.00px;font-size:12.2px;line-height:1;color:#4a6bbf;white-space:nowrap;">ABC Group</div>
<svg class="a" style="left:1562.5px;top:281.0px" width="12" height="12" viewBox="0 0 12 12"><g fill="#a3acb4"><circle cx="6" cy="3" r="2.9"/><path d="M0 12 L0 10.2 C0 8 3.5 7 6 7 C8.5 7 12 8 12 10.2 L12 12Z"/></g></svg>
<div style="position:absolute;left:1586.44px;top:283.00px;font-size:12.2px;line-height:1;color:#4a6bbf;white-space:nowrap;">Sue Cubbin</div>
<div class="tag" style="left:1744.3px;top:278.0px;width:59.4px;height:21.0px"></div>
<div style="position:absolute;left:1752.94px;top:284.00px;font-size:11.5px;line-height:1;color:#f65e68;white-space:nowrap;">Overdue</div>
<div class="sep" style="left:967px;top:310px;width:913px"></div>
<div style="position:absolute;left:983.27px;top:319.00px;font-size:12.2px;line-height:1;color:#4a6bbf;white-space:nowrap;">Customer Service CAll</div>
<div style="position:absolute;left:983.14px;top:338.00px;font-size:10px;line-height:1;color:#606469;white-space:nowrap;transform:scaleX(1.0116);transform-origin:0 0;">15 May 2024, 08:45</div>
<div class="a" style="left:1078px;top:339.0px;width:1.2px;height:12px;background:#587080"></div>
<div style="position:absolute;left:1085.71px;top:338.00px;font-size:10px;line-height:1;color:#606469;white-space:nowrap;transform:scaleX(1.0116);transform-origin:0 0;">To-do</div>
<div class="tag" style="left:1243.3px;top:323.0px;width:53.5px;height:21.0px"></div>
<div style="position:absolute;left:1250.51px;top:329.00px;font-size:11.5px;line-height:1;color:#f79f45;white-space:nowrap;transform:scaleX(1.0572);transform-origin:0 0;">Normal</div>
<svg class="a" style="left:1379.0px;top:326.0px" width="13" height="12" viewBox="0 0 13 12"><g fill="#a9b1b8"><rect x="0" y="0.5" width="6.5" height="11"/><rect x="6.5" y="3.5" width="6" height="8"/></g><g fill="#fff"><rect x="1.5" y="2" width="1.4" height="1.4"/><rect x="3.8" y="2" width="1.4" height="1.4"/><rect x="1.5" y="5" width="1.4" height="1.4"/><rect x="3.8" y="5" width="1.4" height="1.4"/><rect x="1.5" y="8" width="1.4" height="1.4"/><rect x="3.8" y="8" width="1.4" height="1.4"/><rect x="7.8" y="5" width="3.6" height="5.4"/></g><g fill="#a9b1b8"><rect x="8.6" y="6" width="1.2" height="1.2"/><rect x="8.6" y="8.3" width="1.2" height="1.2"/></g></svg>
<div style="position:absolute;left:1403.30px;top:328.00px;font-size:12.2px;line-height:1;color:#4a6bbf;white-space:nowrap;">Downer EDI Maryborough</div>
<svg class="a" style="left:1562.5px;top:326.0px" width="12" height="12" viewBox="0 0 12 12"><g fill="#a3acb4"><circle cx="6" cy="3" r="2.9"/><path d="M0 12 L0 10.2 C0 8 3.5 7 6 7 C8.5 7 12 8 12 10.2 L12 12Z"/></g></svg>
<div style="position:absolute;left:1586.81px;top:328.00px;font-size:12.2px;line-height:1;color:#4a6bbf;white-space:nowrap;">John Shelford</div>
<div class="tag" style="left:1744.3px;top:323.0px;width:59.4px;height:21.0px"></div>
<div style="position:absolute;left:1752.94px;top:329.00px;font-size:11.5px;line-height:1;color:#f65e68;white-space:nowrap;">Overdue</div>
<div class="sep" style="left:967px;top:355px;width:913px"></div>
<div style="position:absolute;left:982.90px;top:364.00px;font-size:12.2px;line-height:1;color:#4a6bbf;white-space:nowrap;">Follow Up Compliant about John Smiths</div>
<div style="position:absolute;left:983.14px;top:383.00px;font-size:10px;line-height:1;color:#606469;white-space:nowrap;transform:scaleX(1.0116);transform-origin:0 0;">15 May 2024, 09:15</div>
<div class="a" style="left:1078px;top:384.0px;width:1.2px;height:12px;background:#587080"></div>
<div style="position:absolute;left:1085.39px;top:383.00px;font-size:10px;line-height:1;color:#606469;white-space:nowrap;transform:scaleX(1.0116);transform-origin:0 0;">Call</div>
<div class="tag" style="left:1243.4px;top:368.0px;width:53.1px;height:21.0px"></div>
<div style="position:absolute;left:1258.28px;top:374.00px;font-size:11.5px;line-height:1;color:#f82460;white-space:nowrap;transform:scaleX(0.9846);transform-origin:0 0;">High</div>
<svg class="a" style="left:1379.0px;top:371.0px" width="13" height="12" viewBox="0 0 13 12"><g fill="#a9b1b8"><rect x="0" y="0.5" width="6.5" height="11"/><rect x="6.5" y="3.5" width="6" height="8"/></g><g fill="#fff"><rect x="1.5" y="2" width="1.4" height="1.4"/><rect x="3.8" y="2" width="1.4" height="1.4"/><rect x="1.5" y="5" width="1.4" height="1.4"/><rect x="3.8" y="5" width="1.4" height="1.4"/><rect x="1.5" y="8" width="1.4" height="1.4"/><rect x="3.8" y="8" width="1.4" height="1.4"/><rect x="7.8" y="5" width="3.6" height="5.4"/></g><g fill="#a9b1b8"><rect x="8.6" y="6" width="1.2" height="1.2"/><rect x="8.6" y="8.3" width="1.2" height="1.2"/></g></svg>
<div style="position:absolute;left:1403.67px;top:373.00px;font-size:12.2px;line-height:1;color:#4a6bbf;white-space:nowrap;">Coomera Waters Estate</div>
<svg class="a" style="left:1562.5px;top:371.0px" width="12" height="12" viewBox="0 0 12 12"><g fill="#a3acb4"><circle cx="6" cy="3" r="2.9"/><path d="M0 12 L0 10.2 C0 8 3.5 7 6 7 C8.5 7 12 8 12 10.2 L12 12Z"/></g></svg>
<div style="position:absolute;left:1586.81px;top:373.00px;font-size:12.2px;line-height:1;color:#4a6bbf;white-space:nowrap;">Jacque Widdison</div>
<div class="tag" style="left:1744.3px;top:368.0px;width:59.4px;height:21.0px"></div>
<div style="position:absolute;left:1752.94px;top:374.00px;font-size:11.5px;line-height:1;color:#f65e68;white-space:nowrap;">Overdue</div>
<div class="sep" style="left:967px;top:400px;width:913px"></div>
<div style="position:absolute;left:982.90px;top:409.00px;font-size:12.2px;line-height:1;color:#4a6bbf;white-space:nowrap;">Monthly Security Meeting</div>
<div style="position:absolute;left:983.14px;top:428.00px;font-size:10px;line-height:1;color:#606469;white-space:nowrap;transform:scaleX(1.0116);transform-origin:0 0;">15 May 2024, 15:45</div>
<div class="a" style="left:1078px;top:429.0px;width:1.2px;height:12px;background:#587080"></div>
<div style="position:absolute;left:1085.71px;top:428.00px;font-size:10px;line-height:1;color:#606469;white-space:nowrap;transform:scaleX(1.0116);transform-origin:0 0;">To-do</div>
<div class="tag" style="left:1243.3px;top:413.0px;width:53.5px;height:21.0px"></div>
<div style="position:absolute;left:1250.51px;top:419.00px;font-size:11.5px;line-height:1;color:#f79f45;white-space:nowrap;transform:scaleX(1.0572);transform-origin:0 0;">Normal</div>
<svg class="a" style="left:1379.5px;top:416.0px" width="12" height="12" viewBox="0 0 12 12"><g fill="#a3acb4"><circle cx="6" cy="3" r="2.9"/><path d="M0 12 L0 10.2 C0 8 3.5 7 6 7 C8.5 7 12 8 12 10.2 L12 12Z"/></g></svg>
<div style="position:absolute;left:1403.30px;top:418.00px;font-size:12.2px;line-height:1;color:#4a6bbf;white-space:nowrap;">Protection World Security</div>
<svg class="a" style="left:1562.5px;top:416.0px" width="12" height="12" viewBox="0 0 12 12"><g fill="#a3acb4"><circle cx="6" cy="3" r="2.9"/><path d="M0 12 L0 10.2 C0 8 3.5 7 6 7 C8.5 7 12 8 12 10.2 L12 12Z"/></g></svg>
<div style="position:absolute;left:1590.25px;top:418.00px;font-size:12.2px;line-height:1;color:#4a6bbf;white-space:nowrap;">Thomas Moore</div>
<div class="tag" style="left:1744.3px;top:413.0px;width:59.4px;height:21.0px"></div>
<div style="position:absolute;left:1752.94px;top:419.00px;font-size:11.5px;line-height:1;color:#f65e68;white-space:nowrap;">Overdue</div>
<div class="sep" style="left:967px;top:445px;width:913px"></div>
<div style="position:absolute;left:982.90px;top:454.00px;font-size:12.2px;line-height:1;color:#4a6bbf;white-space:nowrap;">Monthly Meeting</div>
<div style="position:absolute;left:983.39px;top:473.00px;font-size:10px;line-height:1;color:#606469;white-space:nowrap;transform:scaleX(1.0116);transform-origin:0 0;">29 Feb. 2024, 11:30</div>
<div class="a" style="left:1079px;top:474.0px;width:1.2px;height:12px;background:#587080"></div>
<div style="position:absolute;left:1086.41px;top:473.00px;font-size:10px;line-height:1;color:#606469;white-space:nowrap;transform:scaleX(1.0116);transform-origin:0 0;">To-do</div>
<div class="tag" style="left:1243.3px;top:458.0px;width:53.5px;height:21.0px"></div>
<div style="position:absolute;left:1250.51px;top:464.00px;font-size:11.5px;line-height:1;color:#f79f45;white-space:nowrap;transform:scaleX(1.0572);transform-origin:0 0;">Normal</div>
<svg class="a" style="left:1379.0px;top:461.0px" width="13" height="12" viewBox="0 0 13 12"><g fill="#a9b1b8"><rect x="0" y="0.5" width="6.5" height="11"/><rect x="6.5" y="3.5" width="6" height="8"/></g><g fill="#fff"><rect x="1.5" y="2" width="1.4" height="1.4"/><rect x="3.8" y="2" width="1.4" height="1.4"/><rect x="1.5" y="5" width="1.4" height="1.4"/><rect x="3.8" y="5" width="1.4" height="1.4"/><rect x="1.5" y="8" width="1.4" height="1.4"/><rect x="3.8" y="8" width="1.4" height="1.4"/><rect x="7.8" y="5" width="3.6" height="5.4"/></g><g fill="#a9b1b8"><rect x="8.6" y="6" width="1.2" height="1.2"/><rect x="8.6" y="8.3" width="1.2" height="1.2"/></g></svg>
<div style="position:absolute;left:1404.30px;top:463.00px;font-size:12.2px;line-height:1;color:#4a6bbf;white-space:nowrap;">A Brickworx</div>
<svg class="a" style="left:1562.5px;top:461.0px" width="12" height="12" viewBox="0 0 12 12"><g fill="#a3acb4"><circle cx="6" cy="3" r="2.9"/><path d="M0 12 L0 10.2 C0 8 3.5 7 6 7 C8.5 7 12 8 12 10.2 L12 12Z"/></g></svg>
<div style="position:absolute;left:1586.50px;top:463.00px;font-size:12.2px;line-height:1;color:#4a6bbf;white-space:nowrap;">David Wonderful</div>
<div class="tag" style="left:1744.3px;top:458.0px;width:59.4px;height:21.0px"></div>
<div style="position:absolute;left:1752.94px;top:464.00px;font-size:11.5px;line-height:1;color:#f65e68;white-space:nowrap;">Overdue</div>
<div class="sep" style="left:967px;top:490px;width:913px"></div>
<div style="position:absolute;left:982.90px;top:499.00px;font-size:12.2px;line-height:1;color:#4a6bbf;white-space:nowrap;">Montly Finance Meeting</div>
<div style="position:absolute;left:983.39px;top:518.00px;font-size:10px;line-height:1;color:#606469;white-space:nowrap;transform:scaleX(1.0116);transform-origin:0 0;">29 Feb. 2024, 14:00</div>
<div class="a" style="left:1080px;top:519.0px;width:1.2px;height:12px;background:#587080"></div>
<div style="position:absolute;left:1087.16px;top:518.00px;font-size:10px;line-height:1;color:#606469;white-space:nowrap;transform:scaleX(1.0116);transform-origin:0 0;">To-do</div>
<div class="tag" style="left:1243.3px;top:503.0px;width:53.5px;height:21.0px"></div>
<div style="position:absolute;left:1250.51px;top:509.00px;font-size:11.5px;line-height:1;color:#f79f45;white-space:nowrap;transform:scaleX(1.0572);transform-origin:0 0;">Normal</div>
<svg class="a" style="left:1379.0px;top:506.0px" width="13" height="12" viewBox="0 0 13 12"><g fill="#a9b1b8"><rect x="0" y="0.5" width="6.5" height="11"/><rect x="6.5" y="3.5" width="6" height="8"/></g><g fill="#fff"><rect x="1.5" y="2" width="1.4" height="1.4"/><rect x="3.8" y="2" width="1.4" height="1.4"/><rect x="1.5" y="5" width="1.4" height="1.4"/><rect x="3.8" y="5" width="1.4" height="1.4"/><rect x="1.5" y="8" width="1.4" height="1.4"/><rect x="3.8" y="8" width="1.4" height="1.4"/><rect x="7.8" y="5" width="3.6" height="5.4"/></g><g fill="#a9b1b8"><rect x="8.6" y="6" width="1.2" height="1.2"/><rect x="8.6" y="8.3" width="1.2" height="1.2"/></g></svg>
<div style="position:absolute;left:1403.30px;top:508.00px;font-size:12.2px;line-height:1;color:#4a6bbf;white-space:nowrap;">Dan Murphy's</div>
<svg class="a" style="left:1562.5px;top:506.0px" width="12" height="12" viewBox="0 0 12 12"><g fill="#a3acb4"><circle cx="6" cy="3" r="2.9"/><path d="M0 12 L0 10.2 C0 8 3.5 7 6 7 C8.5 7 12 8 12 10.2 L12 12Z"/></g></svg>
<div style="position:absolute;left:1586.50px;top:508.00px;font-size:12.2px;line-height:1;color:#4a6bbf;white-space:nowrap;">Micheal Smith</div>
<div class="tag" style="left:1744.3px;top:503.0px;width:59.4px;height:21.0px"></div>
<div style="position:absolute;left:1752.94px;top:509.00px;font-size:11.5px;line-height:1;color:#f65e68;white-space:nowrap;">Overdue</div>
<div class="sep" style="left:967px;top:535px;width:913px"></div>
<div style="position:absolute;left:982.90px;top:544.00px;font-size:12.2px;line-height:1;color:#4a6bbf;white-space:nowrap;">Follow Up On Complaint</div>
<div style="position:absolute;left:983.39px;top:563.00px;font-size:10px;line-height:1;color:#606469;white-space:nowrap;transform:scaleX(1.0116);transform-origin:0 0;">28 Jun. 2023, 06:45</div>
<div class="a" style="left:1079px;top:564.0px;width:1.2px;height:12px;background:#587080"></div>
<div style="position:absolute;left:1085.71px;top:563.00px;font-size:10px;line-height:1;color:#606469;white-space:nowrap;transform:scaleX(1.0116);transform-origin:0 0;">Call</div>
<div class="tag" style="left:1243.3px;top:548.0px;width:53.5px;height:21.0px"></div>
<div style="position:absolute;left:1250.51px;top:554.00px;font-size:11.5px;line-height:1;color:#f79f45;white-space:nowrap;transform:scaleX(1.0572);transform-origin:0 0;">Normal</div>
<svg class="a" style="left:1379.0px;top:551.0px" width="13" height="12" viewBox="0 0 13 12"><g fill="#a9b1b8"><rect x="0" y="0.5" width="6.5" height="11"/><rect x="6.5" y="3.5" width="6" height="8"/></g><g fill="#fff"><rect x="1.5" y="2" width="1.4" height="1.4"/><rect x="3.8" y="2" width="1.4" height="1.4"/><rect x="1.5" y="5" width="1.4" height="1.4"/><rect x="3.8" y="5" width="1.4" height="1.4"/><rect x="1.5" y="8" width="1.4" height="1.4"/><rect x="3.8" y="8" width="1.4" height="1.4"/><rect x="7.8" y="5" width="3.6" height="5.4"/></g><g fill="#a9b1b8"><rect x="8.6" y="6" width="1.2" height="1.2"/><rect x="8.6" y="8.3" width="1.2" height="1.2"/></g></svg>
<div style="position:absolute;left:1404.30px;top:553.00px;font-size:12.2px;line-height:1;color:#4a6bbf;white-space:nowrap;">AGL Group</div>
<svg class="a" style="left:1562.5px;top:551.0px" width="12" height="12" viewBox="0 0 12 12"><g fill="#a3acb4"><circle cx="6" cy="3" r="2.9"/><path d="M0 12 L0 10.2 C0 8 3.5 7 6 7 C8.5 7 12 8 12 10.2 L12 12Z"/></g></svg>
<div style="position:absolute;left:1589.31px;top:553.00px;font-size:12.2px;line-height:1;color:#4a6bbf;white-space:nowrap;">Jamie O'Donnell</div>
<div class="tag" style="left:1744.3px;top:548.0px;width:59.4px;height:21.0px"></div>
<div style="position:absolute;left:1752.94px;top:554.00px;font-size:11.5px;line-height:1;color:#f65e68;white-space:nowrap;">Overdue</div>
<div class="sep" style="left:967px;top:580px;width:913px"></div>
<div style="position:absolute;left:1340.06px;top:726.00px;font-size:12.3px;line-height:1;color:#27313b;white-space:nowrap;">10 per view</div>
<svg class="a" style="left:1408.5px;top:729.8px" width="7" height="6" viewBox="0 0 7 6"><path d="M0.6 1 L6.4 1 L3.5 4.8Z" fill="#4d5690"/></svg>
<svg class="a" style="left:1440.5px;top:726.5px" width="6" height="10" viewBox="0 0 6 10"><path d="M5.1 0.8 L0.9 5.0 L5.1 9.2" stroke="#c3c7cf" stroke-width="1.2" fill="none" stroke-linecap="round" stroke-linejoin="round"/></svg>
<div style="position:absolute;left:1459.88px;top:726.00px;font-size:12.3px;line-height:1;color:#27313b;white-space:nowrap;transform:scaleX(0.9812);transform-origin:0 0;">1 of 1</div>
<svg class="a" style="left:1498.5px;top:726.5px" width="6" height="10" viewBox="0 0 6 10"><path d="M0.9 0.8 L5.1 5.0 L0.9 9.2" stroke="#c3c7cf" stroke-width="1.2" fill="none" stroke-linecap="round" stroke-linejoin="round"/></svg>
<div class="card" style="left:24px;top:777px;width:915px;height:224px"></div>
<div class="a" style="left:37.0px;top:798.2px;width:3.6px;height:3.3px;border-radius:1.2px;background:#9aa4ac"></div>
<div class="a" style="left:42.5px;top:798.2px;width:3.6px;height:3.3px;border-radius:1.2px;background:#9aa4ac"></div>
<div class="a" style="left:37.0px;top:802.4px;width:3.6px;height:3.3px;border-radius:1.2px;background:#9aa4ac"></div>
<div class="a" style="left:42.5px;top:802.4px;width:3.6px;height:3.3px;border-radius:1.2px;background:#9aa4ac"></div>
<div class="a" style="left:37.0px;top:806.6px;width:3.6px;height:3.3px;border-radius:1.2px;background:#9aa4ac"></div>
<div class="a" style="left:42.5px;top:806.6px;width:3.6px;height:3.3px;border-radius:1.2px;background:#9aa4ac"></div>
<div style="position:absolute;left:57.96px;top:797.00px;font-size:14.6px;line-height:1;color:#1b232c;white-space:nowrap;transform:scaleX(0.9875);transform-origin:0 0;-webkit-text-stroke:0.3px #1b232c;">Companies &amp; Providers Expiring Licences &amp; Insurance Documents</div>
<div class="btn" style="left:822.7px;top:789.0px;width:62.2px;height:28.5px"></div>
<div style="position:absolute;left:837.70px;top:798.00px;font-size:12.5px;line-height:1;color:#27323d;white-space:nowrap;">Filters</div>
<div class="btn" style="left:892.2px;top:789.0px;width:33.8px;height:28.5px"></div>
<svg class="a" style="left:898.1px;top:796.2px" width="22" height="14" viewBox="0 0 22 14"><path d="M6.1 3.4 L1.4 7.25 L6.1 11.1 M13.8 3.4 L18.6 7.25 L13.8 11.1" stroke="#4b4f86" stroke-width="1.6" fill="none" stroke-linecap="round" stroke-linejoin="round"/></svg>
<div style="position:absolute;left:41.27px;top:846.00px;font-size:12.7px;line-height:1;color:#3b3e42;white-space:nowrap;-webkit-text-stroke:0.25px #3b3e42;">Company Name</div>
<div style="position:absolute;left:258.84px;top:846.00px;font-size:12.7px;line-height:1;color:#3b3e42;white-space:nowrap;-webkit-text-stroke:0.25px #3b3e42;">Document</div>
<div style="position:absolute;left:434.44px;top:846.00px;font-size:12.7px;line-height:1;color:#3b3e42;white-space:nowrap;-webkit-text-stroke:0.25px #3b3e42;">State</div>
<div style="position:absolute;left:608.74px;top:846.00px;font-size:12.7px;line-height:1;color:#3b3e42;white-space:nowrap;-webkit-text-stroke:0.25px #3b3e42;">Expiry Date</div>
<div style="position:absolute;left:744.94px;top:846.00px;font-size:12.7px;line-height:1;color:#3b3e42;white-space:nowrap;-webkit-text-stroke:0.25px #3b3e42;">Expires In</div>
<div class="sep" style="left:25px;top:872px;width:913px"></div>
<svg class="a" style="left:36.00px;top:874.00px" width="44.00" height="44.00" viewBox="0 0 44 44"><g stroke="#1a86cc" stroke-width="3.00" stroke-linecap="round" fill="none"><path d="M6.8 19.5 Q15.5 13 27.6 7.6"/><path d="M8 27 Q19 18.6 32.8 11.8"/><path d="M12 31.5 Q22.5 23.8 35.4 17.4"/><path d="M11 16.8 L11 24.4"/><path d="M31.8 12.5 L31.8 19"/></g><circle cx="18.8" cy="33.6" r="2.9" fill="#1a86cc"/></svg>
<div style="position:absolute;left:88.30px;top:889.00px;font-size:12.2px;line-height:1;color:#4a6bbf;white-space:nowrap;transform:scaleX(0.9512);transform-origin:0 0;">ABC Security</div>
<div style="position:absolute;left:259.09px;top:890.00px;font-size:12px;line-height:1;color:#22313f;white-space:nowrap;transform:scaleX(1.0100);transform-origin:0 0;">Patrol Vichel 1</div>
<div style="position:absolute;left:433.99px;top:890.00px;font-size:12px;line-height:1;color:#22313f;white-space:nowrap;transform:scaleX(1.0100);transform-origin:0 0;">New South Wales</div>
<div style="position:absolute;left:609.54px;top:890.00px;font-size:12px;line-height:1;color:#22313f;white-space:nowrap;transform:scaleX(1.0300);transform-origin:0 0;">4 Apr. 2023</div>
<div class="tag" style="left:745.5px;top:884.5px;width:53.1px;height:21.1px"></div>
<div style="position:absolute;left:753.26px;top:890.00px;font-size:11.5px;line-height:1;color:#f52f62;white-space:nowrap;">Expired</div>
<svg class="a" style="left:879.5px;top:887.0px" width="16" height="16" viewBox="0 0 16 16"><path d="M2.7 8 A5.3 5.3 0 1 1 4.25 11.75" stroke="#a2acb3" stroke-width="1.35" fill="none"/><path d="M0.7 7 L4.7 7 L2.7 9.8Z" fill="#a2acb3"/><path d="M8.1 5.3 L8.1 8.3 L10.1 9.5" stroke="#a2acb3" stroke-width="1.2" fill="none" stroke-linecap="round"/></svg>
<div class="sep" style="left:25px;top:917px;width:912px"></div>
<svg class="a" style="left:36.00px;top:919.00px" width="44.00" height="44.00" viewBox="0 0 44 44"><g stroke="#1a86cc" stroke-width="3.00" stroke-linecap="round" fill="none"><path d="M6.8 19.5 Q15.5 13 27.6 7.6"/><path d="M8 27 Q19 18.6 32.8 11.8"/><path d="M12 31.5 Q22.5 23.8 35.4 17.4"/><path d="M11 16.8 L11 24.4"/><path d="M31.8 12.5 L31.8 19"/></g><circle cx="18.8" cy="33.6" r="2.9" fill="#1a86cc"/></svg>
<div style="position:absolute;left:88.30px;top:934.00px;font-size:12.2px;line-height:1;color:#4a6bbf;white-space:nowrap;transform:scaleX(0.9512);transform-origin:0 0;">ABC Security</div>
<div style="position:absolute;left:259.09px;top:935.00px;font-size:12px;line-height:1;color:#22313f;white-space:nowrap;transform:scaleX(1.0100);transform-origin:0 0;">Director Vehicle</div>
<div style="position:absolute;left:434.43px;top:935.00px;font-size:12px;line-height:1;color:#22313f;white-space:nowrap;transform:scaleX(1.0100);transform-origin:0 0;">Queensland</div>
<div style="position:absolute;left:608.83px;top:935.00px;font-size:12px;line-height:1;color:#22313f;white-space:nowrap;transform:scaleX(1.0300);transform-origin:0 0;">19 Apr. 2023</div>
<div class="tag" style="left:745.5px;top:929.5px;width:53.1px;height:21.1px"></div>
<div style="position:absolute;left:753.26px;top:935.00px;font-size:11.5px;line-height:1;color:#f52f62;white-space:nowrap;">Expired</div>
<svg class="a" style="left:879.5px;top:932.0px" width="16" height="16" viewBox="0 0 16 16"><path d="M2.7 8 A5.3 5.3 0 1 1 4.25 11.75" stroke="#a2acb3" stroke-width="1.35" fill="none"/><path d="M0.7 7 L4.7 7 L2.7 9.8Z" fill="#a2acb3"/><path d="M8.1 5.3 L8.1 8.3 L10.1 9.5" stroke="#a2acb3" stroke-width="1.2" fill="none" stroke-linecap="round"/></svg>
<div class="sep" style="left:25px;top:962px;width:912px"></div>
<div class="card" style="left:966px;top:777px;width:915px;height:224px"></div>
<div class="a" style="left:980.0px;top:798.2px;width:3.6px;height:3.3px;border-radius:1.2px;background:#9aa4ac"></div>
<div class="a" style="left:985.5px;top:798.2px;width:3.6px;height:3.3px;border-radius:1.2px;background:#9aa4ac"></div>
<div class="a" style="left:980.0px;top:802.4px;width:3.6px;height:3.3px;border-radius:1.2px;background:#9aa4ac"></div>
<div class="a" style="left:985.5px;top:802.4px;width:3.6px;height:3.3px;border-radius:1.2px;background:#9aa4ac"></div>
<div class="a" style="left:980.0px;top:806.6px;width:3.6px;height:3.3px;border-radius:1.2px;background:#9aa4ac"></div>
<div class="a" style="left:985.5px;top:806.6px;width:3.6px;height:3.3px;border-radius:1.2px;background:#9aa4ac"></div>
<div style="position:absolute;left:1000.23px;top:797.00px;font-size:14.6px;line-height:1;color:#1b232c;white-space:nowrap;transform:scaleX(0.9717);transform-origin:0 0;-webkit-text-stroke:0.3px #1b232c;">Scheduled Emails</div>
<div class="a" style="left:1478.5px;top:789px;width:179px;height:29px;border:1px solid #e2e4e7;border-radius:7px;background:#fff"></div>
<svg class="a" style="left:1486px;top:795px" width="18" height="18" viewBox="0 0 18 18">
<circle cx="7.6" cy="7.6" r="5.4" stroke="#c9ced5" stroke-width="1.5" fill="none"/>
<path d="M11.6 11.6 L16 16" stroke="#c9ced5" stroke-width="1.8" stroke-linecap="round"/></svg>
<div style="position:absolute;left:1509.64px;top:799.00px;font-size:12.3px;line-height:1;color:#a8adb4;white-space:nowrap;transform:scaleX(0.9943);transform-origin:0 0;">Search email</div>
<div class="a" style="left:1665.3px;top:789.0px;width:161.7px;height:29.0px;border:1px solid #e2e4e7;border-radius:7px;background:#fff"></div>
<svg class="a" style="left:1675.7px;top:799.3px" width="8" height="10" viewBox="0 0 8 10"><path d="M7.1 0.8 L0.9 5.0 L7.1 9.2" stroke="#4b4f80" stroke-width="1.5" fill="none" stroke-linecap="round" stroke-linejoin="round"/></svg>
<div style="position:absolute;left:1700.78px;top:799.00px;font-size:12.3px;line-height:1;color:#1d2935;white-space:nowrap;transform:scaleX(0.9870);transform-origin:0 0;">24 Oct</div>
<div style="position:absolute;left:1747.74px;top:800.00px;font-size:9px;line-height:1;color:#6b7280;white-space:nowrap;transform:scaleX(1.2222);transform-origin:0 0;">~</div>
<div style="position:absolute;left:1759.38px;top:799.00px;font-size:12.3px;line-height:1;color:#1d2935;white-space:nowrap;">24 Nov</div>
<svg class="a" style="left:1811.2px;top:799.3px" width="8" height="10" viewBox="0 0 8 10"><path d="M0.9 0.8 L7.1 5.0 L0.9 9.2" stroke="#4b4f80" stroke-width="1.5" fill="none" stroke-linecap="round" stroke-linejoin="round"/></svg>
<div class="btn" style="left:1835.4px;top:789.0px;width:33.4px;height:29.0px"></div>
<svg class="a" style="left:1841.1px;top:796.5px" width="22" height="14" viewBox="0 0 22 14"><path d="M6.1 3.4 L1.4 7.25 L6.1 11.1 M13.8 3.4 L18.6 7.25 L13.8 11.1" stroke="#4b4f86" stroke-width="1.6" fill="none" stroke-linecap="round" stroke-linejoin="round"/></svg>
</body></html>
